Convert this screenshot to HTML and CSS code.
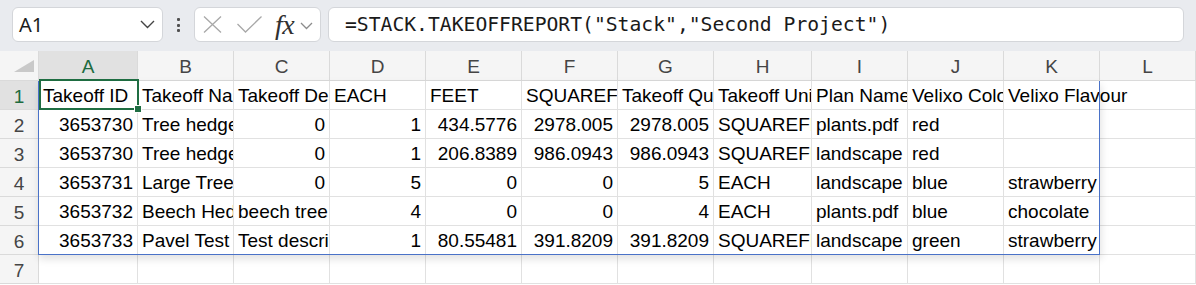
FILE: index.html
```html
<!DOCTYPE html>
<html lang="en">

<head>
    <meta charset="UTF-8">
    <meta name="viewport" content="width=device-width, initial-scale=1.0">
    <link rel="stylesheet" href="styles.css">
    <title>Takeoff report</title>
</head>

<body>
    <!-- formula bar -->
    <div class="bar">
        <div class="namebox">
            <span>A1</span>
            <svg width="15" height="9" viewBox="0 0 15 9"><polyline points="1,1 7.5,7.5 14,1" fill="none" stroke="#444" stroke-width="1.4"/></svg>
        </div>
        <div class="dots"><span></span><span></span><span></span></div>
        <div class="fnbox">
            <svg class="ico-x" width="19" height="17" viewBox="0 0 19 17"><path d="M1 0.5 L18 16.5 M18 0.5 L1 16.5" stroke="#a8a8a8" stroke-width="1.3" fill="none"/></svg>
            <svg class="ico-ok" width="25" height="17" viewBox="0 0 25 17"><polyline points="0.5,8 8.5,16 24.5,0.5" fill="none" stroke="#a8a8a8" stroke-width="1.3"/></svg>
            <span class="fx">fx</span>
            <svg class="ico-dd" width="13" height="8" viewBox="0 0 13 8"><polyline points="1,1 6.5,6.5 12,1" fill="none" stroke="#8c8c8c" stroke-width="1.3"/></svg>
        </div>
        <div class="formula">=STACK.TAKEOFFREPORT("Stack","Second Project")</div>
    </div>

    <!-- sheet -->
    <div class="sheet">
        <div class="c h corner"><span class="tri"></span></div>
        <div class="c h sel">A</div>
        <div class="c h">B</div>
        <div class="c h">C</div>
        <div class="c h">D</div>
        <div class="c h">E</div>
        <div class="c h">F</div>
        <div class="c h">G</div>
        <div class="c h">H</div>
        <div class="c h">I</div>
        <div class="c h">J</div>
        <div class="c h">K</div>
        <div class="c h">L</div>

        <div class="c h rh sel">1</div>
        <div class="c active">Takeoff ID<span class="cursor"><span class="handle"></span></span></div>
        <div class="c">Takeoff Name</div>
        <div class="c">Takeoff Description</div>
        <div class="c">EACH</div>
        <div class="c">FEET</div>
        <div class="c">SQUAREFEET</div>
        <div class="c">Takeoff Quantity</div>
        <div class="c">Takeoff Unit</div>
        <div class="c">Plan Name</div>
        <div class="c">Velixo Color</div>
        <div class="c over">Velixo Flavour</div>
        <div class="c"></div>

        <div class="c h rh">2</div>
        <div class="c n">3653730</div>
        <div class="c">Tree hedges</div>
        <div class="c n">0</div>
        <div class="c n">1</div>
        <div class="c n">434.5776</div>
        <div class="c n">2978.005</div>
        <div class="c n">2978.005</div>
        <div class="c">SQUAREFEET</div>
        <div class="c">plants.pdf</div>
        <div class="c">red</div>
        <div class="c"></div>
        <div class="c"></div>

        <div class="c h rh">3</div>
        <div class="c n">3653730</div>
        <div class="c">Tree hedges</div>
        <div class="c n">0</div>
        <div class="c n">1</div>
        <div class="c n">206.8389</div>
        <div class="c n">986.0943</div>
        <div class="c n">986.0943</div>
        <div class="c">SQUAREFEET</div>
        <div class="c">landscape</div>
        <div class="c">red</div>
        <div class="c"></div>
        <div class="c"></div>

        <div class="c h rh">4</div>
        <div class="c n">3653731</div>
        <div class="c">Large Tree</div>
        <div class="c n">0</div>
        <div class="c n">5</div>
        <div class="c n">0</div>
        <div class="c n">0</div>
        <div class="c n">5</div>
        <div class="c">EACH</div>
        <div class="c">landscape</div>
        <div class="c">blue</div>
        <div class="c">strawberry</div>
        <div class="c"></div>

        <div class="c h rh">5</div>
        <div class="c n">3653732</div>
        <div class="c">Beech Hedge</div>
        <div class="c">beech tree hedge</div>
        <div class="c n">4</div>
        <div class="c n">0</div>
        <div class="c n">0</div>
        <div class="c n">4</div>
        <div class="c">EACH</div>
        <div class="c">plants.pdf</div>
        <div class="c">blue</div>
        <div class="c">chocolate</div>
        <div class="c"></div>

        <div class="c h rh">6</div>
        <div class="c n">3653733</div>
        <div class="c">Pavel Test</div>
        <div class="c">Test description</div>
        <div class="c n">1</div>
        <div class="c n">80.55481</div>
        <div class="c n">391.8209</div>
        <div class="c n">391.8209</div>
        <div class="c">SQUAREFEET</div>
        <div class="c">landscape</div>
        <div class="c">green</div>
        <div class="c">strawberry</div>
        <div class="c"></div>

        <div class="c h rh">7</div>
        <div class="c"></div>
        <div class="c"></div>
        <div class="c"></div>
        <div class="c"></div>
        <div class="c"></div>
        <div class="c"></div>
        <div class="c"></div>
        <div class="c"></div>
        <div class="c"></div>
        <div class="c"></div>
        <div class="c"></div>
        <div class="c"></div>

        <!-- spilled range outline A1:K6 -->
        <div class="spill"></div>
    </div>
</body>

</html>
```

FILE: styles.css
```css
body {
    margin: 0;
    overflow: hidden;
    background-color: #ffffff;
    font-family: "Liberation Sans", Arial, sans-serif;
}

/* formula bar */
.bar {
    display: flex;
    align-items: flex-start;
    height: 51px;
    box-sizing: border-box;
    padding: 7px 12px 0 12px;
    background-color: #e9ebef;
}

.namebox,
.fnbox,
.formula {
    height: 35px;
    box-sizing: border-box;
    border: 1px solid #d4d6da;
    border-radius: 6px;
    background-color: #ffffff;
}

.namebox {
    width: 151px;
    display: flex;
    align-items: center;
    justify-content: space-between;
    padding: 0 7px 0 6px;
    font-family: "Noto Sans", sans-serif;
    font-size: 20px;
    color: #1b1b1b;
}

.dots {
    width: 31px;
    display: flex;
    flex-direction: column;
    align-items: center;
    gap: 2.5px;
    padding-top: 11px;
}

.dots span {
    width: 3px;
    height: 3px;
    border-radius: 1px;
    background-color: #505050;
}

.fnbox {
    width: 127px;
    display: flex;
    align-items: center;
    padding-left: 8px;
}

.ico-ok {
    margin-left: 15px;
}

.fx {
    margin-left: 13px;
    font-family: "Liberation Serif", serif;
    font-style: italic;
    font-size: 28px;
    line-height: 30px;
    color: #303030;
    letter-spacing: -0.5px;
}

.ico-dd {
    margin-left: 6px;
    margin-top: 2px;
}

.formula {
    flex: 1;
    margin-left: 7px;
    padding-left: 16px;
    font-family: "DejaVu Sans Mono", monospace;
    font-size: 19.7px;
    line-height: 33px;
    color: #1a1a1a;
    white-space: nowrap;
    overflow: hidden;
}

/* grid */
.sheet {
    position: relative;
    display: grid;
    grid-template-columns: 39px 99px repeat(6, 96px) 98px repeat(3, 96px) 1fr;
    grid-template-rows: 30px;
    grid-auto-rows: 29px;
    font-size: 19px;
}

.c {
    box-sizing: border-box;
    border-right: 1px solid #e1e1e1;
    border-bottom: 1px solid #e1e1e1;
    padding: 2px 4px 0 4px;
    line-height: 26px;
    white-space: nowrap;
    overflow: hidden;
    color: #000000;
}

.n {
    text-align: right;
}

.h {
    padding: 3px 0 0 0;
    text-align: center;
    background-color: #f5f5f5;
    border-color: #dadada;
    color: #454545;
}

.h.sel {
    background-color: #e1e1e1;
    color: #1d6b40;
}

.corner {
    position: relative;
}

.tri {
    position: absolute;
    right: 4px;
    bottom: 8px;
    width: 0;
    height: 0;
    border-left: 20px solid transparent;
    border-bottom: 12px solid #c9c9c9;
}

.over {
    overflow: visible;
}

.active {
    position: relative;
    overflow: visible;
}

.cursor {
    position: absolute;
    left: 0;
    top: -2px;
    width: 100px;
    height: 31px;
    box-sizing: border-box;
    border: 2px solid #1f6e43;
}

.handle {
    position: absolute;
    right: -5px;
    bottom: -5px;
    width: 6px;
    height: 6px;
    background-color: #1f6e43;
    border: 1px solid #ffffff;
}

.spill {
    position: absolute;
    left: 38px;
    top: 30px;
    width: 1062px;
    height: 174px;
    box-sizing: border-box;
    border: 1px solid #4a72c8;
    border-top: none;
    box-shadow: 1px 4px 8px rgba(0, 0, 0, 0.12);
    pointer-events: none;
}
```
